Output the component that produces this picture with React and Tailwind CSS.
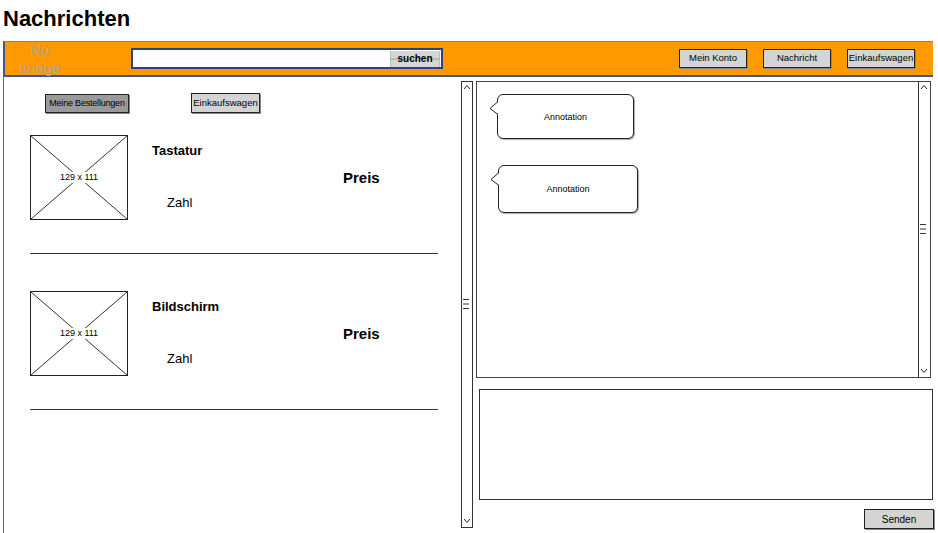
import React from "react";

const sketch = { fontFamily: '"Liberation Sans", Arial, sans-serif' };

const Chevron = ({ up }) => (
  <svg width="8" height="6" viewBox="0 0 8 6" className="block">
    <polyline
      points={up ? "1,5 4,1.5 7,5" : "1,1 4,4.5 7,1"}
      fill="none"
      stroke="#222"
      strokeWidth="1"
    />
  </svg>
);

const Scrollbar = ({ className }) => (
  <div className={`flex flex-col items-start justify-between bg-white ${className}`}>
    <div className="pl-[1px] pt-[2px]"><Chevron up /></div>
    <div className="flex flex-col gap-[3px] pl-[1px]">
      <div className="w-[6px] h-[1px] bg-[#333]" />
      <div className="w-[6px] h-[2px] bg-[#999]" />
      <div className="w-[6px] h-[1px] bg-[#333]" />
    </div>
    <div className="pl-[1px] pb-[3px]"><Chevron /></div>
  </div>
);

const SketchButton = ({ children, dark, className = "" }) => (
  <div
    className={`flex items-center justify-center whitespace-nowrap border border-[#222] text-black shadow-[1px_1px_0_#888] ${dark ? "bg-[#9a9a9a]" : "bg-[#d4d4d4]"} ${className}`}
  >
    {children}
  </div>
);

const Placeholder = () => (
  <div className="relative w-[98px] h-[85px] border border-[#222] bg-white shrink-0">
    <svg className="absolute inset-0" width="96" height="83" viewBox="0 0 96 83">
      <line x1="0" y1="0" x2="96" y2="83" stroke="#333" strokeWidth="1" />
      <line x1="96" y1="0" x2="0" y2="83" stroke="#333" strokeWidth="1" />
    </svg>
    <div className="absolute inset-0 flex items-center justify-center">
      <span className="bg-white px-[1px] text-[9px] leading-[11px] text-black">
        129 x 111
      </span>
    </div>
  </div>
);

const OrderItem = ({ name }) => (
  <div className="flex flex-col pl-[26px]">
    <div className="flex items-start">
      <Placeholder />
      <div className="ml-[24px] w-[191px] flex flex-col">
        <div className="mt-[8px] text-[13px] leading-[16px] font-bold text-black">{name}</div>
        <div className="ml-[15px] mt-[36px] text-[13px] leading-[16px] text-black">Zahl</div>
      </div>
      <div className="mt-[34px] text-[15px] leading-[18px] font-bold text-black">Preis</div>
    </div>
    <div className="mt-[33px] w-[408px] h-[1px] bg-[#333]" />
  </div>
);

const Annotation = ({ className }) => (
  <div className={`relative flex items-center justify-center pt-[2px] border border-[#222] rounded-[6px] bg-white shadow-[1px_1px_1px_#aaa] ${className}`}>
    <svg className="absolute left-[-9px] top-[6px]" width="10" height="15" viewBox="0 0 10 15">
      <polygon points="9.5,0.5 1,7.5 9.5,13.5" fill="white" />
      <polyline points="9,0.5 1,7.5 9,13.5" fill="none" stroke="#222" strokeWidth="1" />
    </svg>
    <span className="text-[9px] text-black">Annotation</span>
  </div>
);

export default function App() {
  return (
    <div className="w-[938px] h-[533px] overflow-hidden bg-white flex flex-col" style={sketch}>
      <div className="h-[41px] pl-[3px] pt-[6px]">
        <h1 className="text-[22px] leading-[26px] font-bold text-black">Nachrichten</h1>
      </div>

      <div className="ml-[3px] w-[930px] h-[36px] bg-[#ff9900] border-t border-l-2 border-b-2 border-[#3c5595] border-t-[#c87a10] flex items-center">
        <div className="w-[70px] text-center text-[15px] leading-[18px] text-[#b3a48e]">
          No<br />Image
        </div>
        <div className="ml-[56px] w-[312px] h-[21px] border-2 border-[#2f3f85] bg-white flex items-center justify-end pr-[1px]">
          <div className="w-[50px] h-[16px] bg-[#d6d6d6] border-x border-[#bbb] flex items-center justify-center text-[10px] font-bold text-black bg-[linear-gradient(#d6d6d6_45%,#b8b8b8_45%,#b8b8b8_55%,#d6d6d6_55%)]">
            suchen
          </div>
        </div>
        <div className="ml-auto mr-[18px] flex gap-[16px]">
          <SketchButton className="w-[68px] h-[19px] text-[9.5px]">Mein Konto</SketchButton>
          <SketchButton className="w-[68px] h-[19px] text-[9.5px]">Nachricht</SketchButton>
          <SketchButton className="w-[68px] h-[19px] text-[9.5px]">Einkaufswagen</SketchButton>
        </div>
      </div>

      <div className="flex h-[456px]">
        <div className="ml-[3px] w-[457px] border-l border-[#666] pt-[16px] flex flex-col">
          <div className="flex items-start">
            <SketchButton dark className="ml-[41px] mt-[1px] w-[84px] h-[19px] text-[9px] tracking-[-0.2px]">Meine Bestellungen</SketchButton>
            <SketchButton className="ml-[62px] w-[69px] h-[20px] text-[9.5px]">Einkaufswagen</SketchButton>
          </div>
          <div className="mt-[22px] flex flex-col gap-[37px]">
            <OrderItem name="Tastatur" />
            <OrderItem name="Bildschirm" />
          </div>
        </div>

        <Scrollbar className="ml-[1px] mt-[4px] w-[12px] h-[447px] border border-[#333]" />

        <div className="ml-[3px] flex flex-col">
          <div className="mt-[4px] w-[455px] h-[297px] border border-[#444] flex">
            <div className="flex-1 flex flex-col">
              <Annotation className="ml-[20px] mt-[12px] w-[137px] h-[45px]" />
              <Annotation className="ml-[21px] mt-[26px] w-[140px] h-[48px]" />
            </div>
            <Scrollbar className="w-[12px] h-full border-l border-[#333]" />
          </div>
          <div className="ml-[3px] mt-[11px] w-[454px] h-[111px] border border-[#333] bg-white" />
          <SketchButton className="ml-[388px] mt-[9px] w-[70px] h-[20px] text-[10px]">Senden</SketchButton>
        </div>
      </div>
    </div>
  );
}
